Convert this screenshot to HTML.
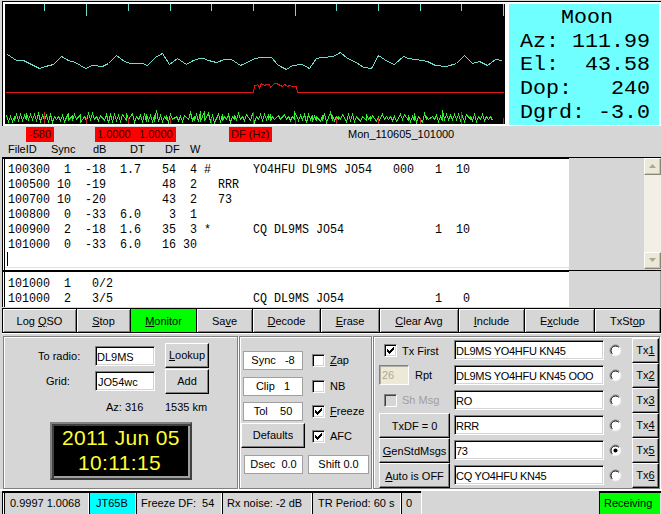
<!DOCTYPE html>
<html><head><meta charset="utf-8">
<style>
*{margin:0;padding:0}
html,body{width:662px;height:514px;overflow:hidden;background:#d6d6d6}
body{position:relative;font-family:"Liberation Sans",sans-serif;font-size:11px;color:#000}
.a{position:absolute;box-sizing:border-box}
.t{position:absolute;white-space:pre;line-height:11px;font-size:11px}
.m{position:absolute;white-space:pre;font-family:"Liberation Mono",monospace;font-size:13px;line-height:15px;transform:scaleX(0.8974);transform-origin:0 0}
.btn{position:absolute;box-sizing:border-box;border:1px solid #000;box-shadow:inset 1px 1px 0 #fff,inset -1px -1px 0 #808080;background:#d6d6d6;text-align:center;white-space:pre;line-height:22px;padding-top:1px}
.ent{position:absolute;box-sizing:border-box;background:#fff;border-top:1px solid #808080;border-left:1px solid #808080;border-bottom:1px solid #fff;border-right:1px solid #fff;box-shadow:inset 1px 1px 0 #000,inset -1px -1px 0 #d4d4d4;white-space:pre;padding-left:1px;padding-top:2px;line-height:17px}
.grv{position:absolute;box-sizing:border-box;border:1px solid #808080;box-shadow:1px 1px 0 #fff inset, 1px 1px 0 #fff}
.cb{position:absolute;box-sizing:border-box;width:13px;height:13px;background:#fff;border-top:1px solid #808080;border-left:1px solid #808080;border-bottom:1px solid #fff;border-right:1px solid #fff;box-shadow:inset 1px 1px 0 #000,inset -1px -1px 0 #d4d4d4}
.rd{position:absolute;width:12px;height:12px}
.rb{position:absolute;box-sizing:border-box;border-top:1px solid #fff;border-left:1px solid #fff;border-bottom:1px solid #000;border-right:1px solid #000;box-shadow:inset -1px -1px 0 #808080;background:#d6d6d6;text-align:center;white-space:pre;line-height:22px;padding-top:1px}
.red{position:absolute;background:#ff0000;height:15px}
.sb{position:absolute;top:491px;height:23px;box-sizing:border-box;border-top:1px solid #000;border-left:1px solid #000;border-right:1px solid #fff;line-height:21px;white-space:pre;padding-top:1px}
u{text-decoration:underline;text-underline-offset:0.5px;text-decoration-thickness:1px}
</style></head><body>

<div class="a" style="left:2px;top:1px;width:659px;height:1px;background:#000"></div>
<div class="a" style="left:2px;top:1px;width:1px;height:125px;background:#000"></div>
<div class="a" style="left:3px;top:2px;width:658px;height:124px;background:#fff"></div>
<svg width="500" height="120" viewBox="5 4 500 120" style="position:absolute;left:5px;top:4px">
<rect x="5" y="4" width="500" height="120" fill="#000"/>
<rect x="44" y="4" width="1" height="7" fill="#70dcd0"/>
<rect x="86" y="4" width="1" height="12" fill="#70dcd0"/>
<rect x="128" y="4" width="1" height="7" fill="#70dcd0"/>
<rect x="170" y="4" width="1" height="7" fill="#70dcd0"/>
<rect x="211" y="4" width="1" height="7" fill="#70dcd0"/>
<rect x="253" y="4" width="1" height="7" fill="#70dcd0"/>
<rect x="295" y="4" width="1" height="12" fill="#70dcd0"/>
<rect x="336" y="4" width="1" height="7" fill="#70dcd0"/>
<rect x="378" y="4" width="1" height="7" fill="#70dcd0"/>
<rect x="420" y="4" width="1" height="7" fill="#70dcd0"/>
<rect x="461" y="4" width="1" height="7" fill="#70dcd0"/>
<rect x="503" y="4" width="1" height="12" fill="#70dcd0"/>
<polyline points="7.5,54.5 16.5,60.5 23.5,60.5 39.5,68.5 45.5,66.5 53.5,64.5 61.5,56.5 68.5,60.5 75.5,62.5 85.5,68.5 92.5,65.5 102.5,66.5 108.5,63.5 116.5,55.5 124.5,61.5 130.5,63.5 142.5,63.5 147.5,65.5 155.5,57.5 162.5,53.5 169.5,64.5 177.5,58.5 186.5,64.5 193.5,60.5 199.5,58.5 203.5,58.5 208.5,60.5 216.5,62.5 224.5,59.5 231.5,59.5 240.5,65.5 255.5,58.5 260.5,57.5 271.5,57.5 277.5,64.5 280.5,66.5 286.5,69.5 292.5,65.5 302.5,64.5 309.5,68.5 316.5,58.5 322.5,57.5 333.5,56.5 340.5,52.5 347.5,58.5 356.5,62.5 363.5,67.5 371.5,68.5 378.5,55.5 387.5,61.5 394.5,64.5 403.5,56.5 408.5,58.5 422.5,60.5 427.5,61.5 435.5,65.5 446.5,66.5 456.5,63.5 464.5,55.5 472.5,63.5 479.5,61.5 487.5,65.5 495.5,59.5 502.5,60.5" fill="none" stroke="#70dcd0" stroke-width="1" shape-rendering="crispEdges"/>
<polyline points="5.5,92.5 253.5,92.5 254.5,86.5 254.5,85.5 256.5,85.5 257.5,84.5 258.5,85.5 259.5,87.5 261.5,83.5 264.5,85.5 266.5,84.5 269.5,84.5 270.5,87.5 271.5,86.5 274.5,83.5 276.5,83.5 278.5,84.5 280.5,85.5 282.5,86.5 284.5,84.5 286.5,85.5 287.5,86.5 289.5,85.5 292.5,86.5 295.5,86.5 296.5,86.5 297.5,92.5 503.5,92.5" fill="none" stroke="#e01414" stroke-width="1" shape-rendering="crispEdges"/>
<polyline points="6.5,115.5 8.5,121.5 10.5,116.5 12.5,121.5 14.5,116.5 14.5,120.5 16.5,114.5 18.5,120.5 20.5,114.5 22.5,120.5 24.5,115.5 26.5,119.5 26.5,113.5 28.5,119.5 30.5,114.5 32.5,119.5 34.5,114.5 36.5,120.5 38.5,113.5 40.5,121.5 42.5,115.5 44.5,119.5 46.5,115.5 48.5,121.5 50.5,114.5 52.5,122.5 54.5,116.5 56.5,119.5 58.5,116.5 60.5,120.5 62.5,115.5 64.5,121.5 68.5,113.5 68.5,120.5 72.5,115.5 72.5,120.5 74.5,114.5 76.5,119.5 80.5,114.5 80.5,122.5 84.5,116.5 86.5,120.5 88.5,113.5 90.5,119.5 92.5,113.5 94.5,119.5 96.5,116.5 98.5,120.5 100.5,115.5 104.5,120.5 106.5,114.5 108.5,122.5 110.5,114.5 112.5,121.5 114.5,114.5 116.5,120.5 118.5,115.5 120.5,121.5 122.5,114.5 126.5,120.5 126.5,113.5 128.5,119.5 132.5,113.5 134.5,122.5 136.5,116.5 138.5,119.5 140.5,115.5 142.5,121.5 144.5,114.5 146.5,121.5 146.5,114.5 148.5,120.5 150.5,115.5 152.5,121.5 154.5,115.5 154.5,121.5 156.5,110.5 158.5,121.5 160.5,115.5 162.5,121.5 164.5,116.5 166.5,119.5 166.5,115.5 168.5,122.5 170.5,114.5 172.5,119.5 176.5,116.5 178.5,120.5 180.5,116.5 182.5,121.5 184.5,115.5 188.5,119.5 190.5,112.5 192.5,120.5 194.5,116.5 194.5,120.5 196.5,114.5 198.5,121.5 200.5,111.5 200.5,121.5 204.5,111.5 204.5,120.5 208.5,113.5 210.5,121.5 212.5,115.5 214.5,122.5 218.5,114.5 220.5,121.5 222.5,114.5 222.5,120.5 224.5,116.5 226.5,119.5 228.5,114.5 230.5,122.5 232.5,116.5 234.5,119.5 234.5,115.5 236.5,119.5 238.5,113.5 240.5,119.5 242.5,116.5 244.5,120.5 246.5,114.5 250.5,120.5 252.5,113.5 254.5,122.5 256.5,116.5 258.5,119.5 260.5,114.5 262.5,120.5 264.5,114.5 266.5,119.5 268.5,114.5 268.5,119.5 270.5,114.5 270.5,120.5 272.5,116.5 274.5,119.5 278.5,115.5 280.5,119.5 284.5,114.5 286.5,119.5 288.5,116.5 290.5,120.5 292.5,116.5 294.5,119.5 294.5,111.5 298.5,120.5 300.5,115.5 302.5,119.5 304.5,114.5 306.5,122.5 308.5,114.5 310.5,119.5 312.5,115.5 312.5,121.5 314.5,116.5 316.5,120.5 316.5,116.5 320.5,121.5 322.5,115.5 322.5,120.5 324.5,113.5 326.5,122.5 330.5,112.5 332.5,120.5 332.5,115.5 334.5,120.5 336.5,116.5 338.5,119.5 338.5,116.5 340.5,119.5 342.5,114.5 346.5,121.5 348.5,114.5 350.5,120.5 352.5,114.5 354.5,121.5 356.5,116.5 360.5,121.5 362.5,116.5 366.5,120.5 366.5,114.5 368.5,119.5 370.5,116.5 370.5,120.5 372.5,115.5 376.5,121.5 378.5,116.5 378.5,121.5 382.5,114.5 384.5,119.5 386.5,116.5 388.5,119.5 390.5,116.5 392.5,120.5 394.5,116.5 396.5,121.5 400.5,114.5 402.5,119.5 404.5,114.5 408.5,120.5 408.5,115.5 410.5,121.5 412.5,116.5 414.5,120.5 414.5,113.5 416.5,122.5 418.5,116.5 422.5,122.5 424.5,113.5 426.5,119.5 426.5,116.5 428.5,119.5 432.5,116.5 434.5,119.5 436.5,115.5 438.5,121.5 440.5,116.5 442.5,120.5 442.5,110.5 444.5,119.5 446.5,114.5 448.5,119.5 450.5,115.5 452.5,119.5 454.5,114.5 456.5,119.5 458.5,114.5 460.5,120.5 462.5,116.5 464.5,121.5 466.5,114.5 470.5,119.5 470.5,116.5 472.5,120.5 474.5,114.5 476.5,121.5 478.5,116.5 480.5,119.5 482.5,114.5 484.5,120.5 486.5,116.5 488.5,119.5 490.5,116.5 492.5,120.5" fill="none" stroke="#30f030" stroke-width="1" shape-rendering="crispEdges"/>
<rect x="44" y="112" width="1" height="12" fill="#c82020"/>
<rect x="86" y="118" width="1" height="6" fill="#c82020"/>
<rect x="128" y="118" width="1" height="6" fill="#c82020"/>
<rect x="170" y="118" width="1" height="6" fill="#c82020"/>
<rect x="211" y="118" width="1" height="6" fill="#c82020"/>
<rect x="253" y="112" width="1" height="12" fill="#c82020"/>
<rect x="295" y="118" width="1" height="6" fill="#c82020"/>
<rect x="336" y="118" width="1" height="6" fill="#c82020"/>
<rect x="378" y="118" width="1" height="6" fill="#c82020"/>
<rect x="420" y="118" width="1" height="6" fill="#c82020"/>
<rect x="461" y="112" width="1" height="12" fill="#c82020"/>
<rect x="503" y="118" width="1" height="6" fill="#c82020"/>
</svg>
<div class="a" style="left:509px;top:4px;width:150px;height:121px;background:#70ffff"></div>
<div class="a" style="left:522px;top:7.9px;white-space:pre;font-family:'Liberation Mono',monospace;font-size:19.5px;line-height:20px;transform:scaleX(1.1111);transform-origin:0 0">   Moon</div>
<div class="a" style="left:520px;top:31.5px;white-space:pre;font-family:'Liberation Mono',monospace;font-size:19.5px;line-height:20px;transform:scaleX(1.1111);transform-origin:0 0">Az: 111.99</div>
<div class="a" style="left:520px;top:55.0px;white-space:pre;font-family:'Liberation Mono',monospace;font-size:19.5px;line-height:20px;transform:scaleX(1.1111);transform-origin:0 0">El:  43.58</div>
<div class="a" style="left:520px;top:78.8px;white-space:pre;font-family:'Liberation Mono',monospace;font-size:19.5px;line-height:20px;transform:scaleX(1.1111);transform-origin:0 0">Dop:   240</div>
<div class="a" style="left:520px;top:102.5px;white-space:pre;font-family:'Liberation Mono',monospace;font-size:19.5px;line-height:20px;transform:scaleX(1.1111);transform-origin:0 0">Dgrd: -3.0</div>
<div class="red" style="left:26px;top:127px;width:28px"></div>
<div class="t" style="left:29px;top:129px;color:#300000">-580</div>
<div class="red" style="left:95px;top:127px;width:81px"></div>
<div class="t" style="left:97px;top:129px;color:#300000">1.0000</div>
<div class="t" style="left:139px;top:129px;color:#300000">1.0000</div>
<div class="red" style="left:229px;top:127px;width:43px"></div>
<div class="t" style="left:231px;top:129px;color:#300000">DF (Hz)</div>
<div class="t" style="left:348px;top:129px">Mon_110605_101000</div>
<div class="t" style="left:8px;top:144px">FileID</div>
<div class="t" style="left:51px;top:144px">Sync</div>
<div class="t" style="left:93px;top:144px">dB</div>
<div class="t" style="left:130px;top:144px">DT</div>
<div class="t" style="left:165px;top:144px">DF</div>
<div class="t" style="left:190px;top:144px">W</div>
<div class="a" style="left:2px;top:157px;width:659px;height:1px;background:#000"></div>
<div class="a" style="left:2px;top:158px;width:567px;height:112px;background:#fff"></div>
<div class="a" style="left:2px;top:158px;width:567px;height:1px;background:#000"></div>
<div class="a" style="left:2px;top:158px;width:1px;height:112px;background:#000"></div>
<div class="a" style="left:4px;top:158px;width:1px;height:112px;background:#000"></div>
<div class="a" style="left:5px;top:267px;width:564px;height:1px;background:#e0e0e0"></div>
<div class="m" style="left:7.5px;top:162.2px">100300  1  -18  1.7   54  4 #      YO4HFU DL9MS JO54   000   1  10</div>
<div class="m" style="left:7.5px;top:177.2px">100500 10  -19        48  2   RRR</div>
<div class="m" style="left:7.5px;top:192.2px">100700 10  -20        43  2   73</div>
<div class="m" style="left:7.5px;top:207.2px">100800  0  -33  6.0    3  1</div>
<div class="m" style="left:7.5px;top:222.2px">100900  2  -18  1.6   35  3 *      CQ DL9MS JO54             1  10</div>
<div class="m" style="left:7.5px;top:237.2px">101000  0  -33  6.0   16 30</div>
<div class="a" style="left:7px;top:252px;width:1px;height:14px;background:#000"></div>
<div class="a" style="left:644px;top:158px;width:17px;height:111px;background:#f2f0e6"></div>
<div class="a" style="left:644px;top:158px;width:17px;height:17px;background:#ece9d8;border-top:1px solid #fffef8;border-left:1px solid #fffef8;border-right:1px solid #8a8878;border-bottom:1px solid #8a8878;box-shadow:inset -1px -1px 0 #c8c4b0;box-sizing:border-box"></div>
<div class="a" style="left:644px;top:252px;width:17px;height:17px;background:#ece9d8;border-top:1px solid #fffef8;border-left:1px solid #fffef8;border-right:1px solid #8a8878;border-bottom:1px solid #8a8878;box-shadow:inset -1px -1px 0 #c8c4b0;box-sizing:border-box"></div>
<svg class="a" style="left:648px;top:162px" width="10" height="8"><polygon points="1,6 4.5,2 8,6" fill="#a8a89a"/></svg>
<svg class="a" style="left:648px;top:256px" width="10" height="8"><polygon points="1,2 4.5,6 8,2" fill="#a8a89a"/></svg>
<div class="a" style="left:2px;top:270px;width:659px;height:1px;background:#000"></div>
<div class="a" style="left:2px;top:271px;width:567px;height:36px;background:#fff"></div>
<div class="a" style="left:2px;top:271px;width:567px;height:1px;background:#000"></div>
<div class="a" style="left:2px;top:271px;width:1px;height:36px;background:#000"></div>
<div class="a" style="left:4px;top:271px;width:1px;height:36px;background:#000"></div>
<div class="a" style="left:660px;top:271px;width:1px;height:36px;background:#a0a0a0"></div>
<div class="m" style="left:7.5px;top:275.5px">101000  1   0/2</div>
<div class="m" style="left:7.5px;top:290.5px">101000  2   3/5                    CQ DL9MS JO54             1   0</div>
<div class="btn" style="left:2px;top:308px;width:75px;height:25px;">Log <u>Q</u>SO</div>
<div class="btn" style="left:76px;top:308px;width:55px;height:25px;"><u>S</u>top</div>
<div class="btn" style="left:130px;top:308px;width:67px;height:25px;background:#00ff00;box-shadow:none;"><u>M</u>onitor</div>
<div class="btn" style="left:196px;top:308px;width:57px;height:25px;">Sa<u>v</u>e</div>
<div class="btn" style="left:252px;top:308px;width:69px;height:25px;"><u>D</u>ecode</div>
<div class="btn" style="left:320px;top:308px;width:60px;height:25px;"><u>E</u>rase</div>
<div class="btn" style="left:379px;top:308px;width:80px;height:25px;"><u>C</u>lear Avg</div>
<div class="btn" style="left:458px;top:308px;width:67px;height:25px;"><u>I</u>nclude</div>
<div class="btn" style="left:524px;top:308px;width:71px;height:25px;">E<u>x</u>clude</div>
<div class="btn" style="left:594px;top:308px;width:67px;height:25px;">TxSt<u>o</u>p</div>
<div class="a" style="left:2px;top:333px;width:659px;height:1px;background:#fff"></div>
<div class="grv" style="left:3px;top:336px;width:235px;height:153px"></div>
<div class="grv" style="left:239px;top:336px;width:133px;height:153px"></div>
<div class="grv" style="left:373px;top:336px;width:287px;height:153px"></div>
<div class="t" style="left:38px;top:351px">To radio:</div>
<div class="t" style="left:46px;top:376px">Grid:</div>
<div class="ent" style="left:95px;top:346px;width:60px;height:20px">DL9MS</div>
<div class="ent" style="left:95px;top:371px;width:60px;height:20px;padding-left:2px">JO54wc</div>
<div class="rb" style="left:165px;top:343px;width:44px;height:25px;padding-top:0"><u>L</u>ookup</div>
<div class="rb" style="left:165px;top:369px;width:44px;height:25px;padding-top:0">Add</div>
<div class="t" style="left:106px;top:402px">Az: 316</div>
<div class="t" style="left:165px;top:402px">1535 km</div>
<div class="a" style="left:50px;top:422px;width:142px;height:58px;background:#000;border:2px solid;border-color:#808080 #404040 #404040 #808080;box-shadow:inset 2px 2px 0 #404040,inset -2px -2px 0 #a0a0a0"></div>
<div class="a" style="left:62px;top:426px;font-size:21px;line-height:24px;letter-spacing:0.35px;color:#ffff30;white-space:pre">2011 Jun 05</div>
<div class="a" style="left:78px;top:451px;font-size:21px;line-height:24px;letter-spacing:0.35px;color:#ffff30;white-space:pre">10:11:15</div>
<div class="a" style="left:243px;top:351px;width:60px;height:19px;background:#fff;border:1px solid #a0a0a0;text-align:center;line-height:17px;white-space:pre">Sync   -8</div>
<div class="a" style="left:243px;top:377px;width:60px;height:19px;background:#fff;border:1px solid #a0a0a0;text-align:center;line-height:17px;white-space:pre">Clip   1</div>
<div class="a" style="left:243px;top:402px;width:60px;height:19px;background:#fff;border:1px solid #a0a0a0;text-align:center;line-height:17px;white-space:pre">Tol    50</div>
<div class="rb" style="left:241px;top:423px;width:64px;height:25px;padding-top:0">Defaults</div>
<div class="a" style="left:244px;top:455px;width:59px;height:19px;background:#fff;border:1px solid #a0a0a0;text-align:center;line-height:17px;white-space:pre">Dsec  0.0</div>
<div class="a" style="left:308px;top:455px;width:61px;height:19px;background:#fff;border:1px solid #a0a0a0;text-align:center;line-height:17px;white-space:pre">Shift 0.0</div>
<div class="cb" style="left:312px;top:354px"></div>
<div class="t" style="left:330px;top:355px"><u>Z</u>ap</div>
<div class="cb" style="left:312px;top:380px"></div>
<div class="t" style="left:330px;top:381px">NB</div>
<div class="cb" style="left:312px;top:405px"></div>
<svg class="a" style="left:312px;top:405px" width="13" height="13" shape-rendering="crispEdges"><rect x="9" y="3" width="1" height="1"/><rect x="8" y="4" width="1" height="1"/><rect x="9" y="4" width="1" height="1"/><rect x="3" y="5" width="1" height="1"/><rect x="7" y="5" width="1" height="1"/><rect x="8" y="5" width="1" height="1"/><rect x="9" y="5" width="1" height="1"/><rect x="3" y="6" width="1" height="1"/><rect x="4" y="6" width="1" height="1"/><rect x="6" y="6" width="1" height="1"/><rect x="7" y="6" width="1" height="1"/><rect x="8" y="6" width="1" height="1"/><rect x="3" y="7" width="1" height="1"/><rect x="4" y="7" width="1" height="1"/><rect x="5" y="7" width="1" height="1"/><rect x="6" y="7" width="1" height="1"/><rect x="7" y="7" width="1" height="1"/><rect x="4" y="8" width="1" height="1"/><rect x="5" y="8" width="1" height="1"/><rect x="6" y="8" width="1" height="1"/><rect x="5" y="9" width="1" height="1"/></svg>
<div class="t" style="left:330px;top:406px"><u>F</u>reeze</div>
<div class="cb" style="left:312px;top:430px"></div>
<svg class="a" style="left:312px;top:430px" width="13" height="13" shape-rendering="crispEdges"><rect x="9" y="3" width="1" height="1"/><rect x="8" y="4" width="1" height="1"/><rect x="9" y="4" width="1" height="1"/><rect x="3" y="5" width="1" height="1"/><rect x="7" y="5" width="1" height="1"/><rect x="8" y="5" width="1" height="1"/><rect x="9" y="5" width="1" height="1"/><rect x="3" y="6" width="1" height="1"/><rect x="4" y="6" width="1" height="1"/><rect x="6" y="6" width="1" height="1"/><rect x="7" y="6" width="1" height="1"/><rect x="8" y="6" width="1" height="1"/><rect x="3" y="7" width="1" height="1"/><rect x="4" y="7" width="1" height="1"/><rect x="5" y="7" width="1" height="1"/><rect x="6" y="7" width="1" height="1"/><rect x="7" y="7" width="1" height="1"/><rect x="4" y="8" width="1" height="1"/><rect x="5" y="8" width="1" height="1"/><rect x="6" y="8" width="1" height="1"/><rect x="5" y="9" width="1" height="1"/></svg>
<div class="t" style="left:330px;top:431px">AFC</div>
<div class="cb" style="left:384px;top:344px"></div>
<svg class="a" style="left:384px;top:344px" width="13" height="13" shape-rendering="crispEdges"><rect x="9" y="3" width="1" height="1"/><rect x="8" y="4" width="1" height="1"/><rect x="9" y="4" width="1" height="1"/><rect x="3" y="5" width="1" height="1"/><rect x="7" y="5" width="1" height="1"/><rect x="8" y="5" width="1" height="1"/><rect x="9" y="5" width="1" height="1"/><rect x="3" y="6" width="1" height="1"/><rect x="4" y="6" width="1" height="1"/><rect x="6" y="6" width="1" height="1"/><rect x="7" y="6" width="1" height="1"/><rect x="8" y="6" width="1" height="1"/><rect x="3" y="7" width="1" height="1"/><rect x="4" y="7" width="1" height="1"/><rect x="5" y="7" width="1" height="1"/><rect x="6" y="7" width="1" height="1"/><rect x="7" y="7" width="1" height="1"/><rect x="4" y="8" width="1" height="1"/><rect x="5" y="8" width="1" height="1"/><rect x="6" y="8" width="1" height="1"/><rect x="5" y="9" width="1" height="1"/></svg>
<div class="t" style="left:402px;top:346px">Tx First</div>
<div class="a" style="left:379px;top:365px;width:30px;height:20px;background:#ece9d8;border-top:1px solid #808080;border-left:1px solid #808080;border-bottom:1px solid #fff;border-right:1px solid #fff;box-shadow:inset 1px 1px 0 #b0b0a8;color:#aca899;line-height:18px;padding-left:2px">26</div>
<div class="t" style="left:415px;top:370px">Rpt</div>
<div class="a" style="left:384px;top:394px;width:13px;height:13px;border-top:1px solid #808080;border-left:1px solid #808080;border-bottom:1px solid #fff;border-right:1px solid #fff;box-shadow:inset 1px 1px 0 #404040;background:#d6d6d6"></div>
<div class="t" style="left:402px;top:395px;color:#a0a0a0">Sh Msg</div>
<div class="rb" style="left:379px;top:413px;width:71px;height:25px">TxDF = 0</div>
<div class="rb" style="left:379px;top:438px;width:71px;height:25px"><u>G</u>enStdMsgs</div>
<div class="rb" style="left:379px;top:463px;width:71px;height:25px"><u>A</u>uto is OFF</div>
<div class="ent" style="left:454px;top:340px;width:150px;height:20px;letter-spacing:-0.3px">DL9MS YO4HFU KN45</div>
<svg class="a" style="left:609px;top:344px" width="13" height="13"><circle cx="6.5" cy="6.5" r="5.5" fill="#fff" stroke="#e8e8e8"/><path d="M2.6,10.4 A5.5,5.5 0 0 1 10.4,2.6" fill="none" stroke="#808080"/><path d="M3.3,9.7 A4.5,4.5 0 0 1 9.7,3.3" fill="none" stroke="#000"/></svg>
<div class="rb" style="left:632px;top:338px;width:27px;height:25px;padding-top:0">Tx<u>1</u></div>
<div class="ent" style="left:454px;top:365px;width:150px;height:20px;letter-spacing:-0.3px">DL9MS YO4HFU KN45 OOO</div>
<svg class="a" style="left:609px;top:369px" width="13" height="13"><circle cx="6.5" cy="6.5" r="5.5" fill="#fff" stroke="#e8e8e8"/><path d="M2.6,10.4 A5.5,5.5 0 0 1 10.4,2.6" fill="none" stroke="#808080"/><path d="M3.3,9.7 A4.5,4.5 0 0 1 9.7,3.3" fill="none" stroke="#000"/></svg>
<div class="rb" style="left:632px;top:363px;width:27px;height:25px;padding-top:0">Tx<u>2</u></div>
<div class="ent" style="left:454px;top:390px;width:150px;height:20px;letter-spacing:-0.3px">RO</div>
<svg class="a" style="left:609px;top:394px" width="13" height="13"><circle cx="6.5" cy="6.5" r="5.5" fill="#fff" stroke="#e8e8e8"/><path d="M2.6,10.4 A5.5,5.5 0 0 1 10.4,2.6" fill="none" stroke="#808080"/><path d="M3.3,9.7 A4.5,4.5 0 0 1 9.7,3.3" fill="none" stroke="#000"/></svg>
<div class="rb" style="left:632px;top:388px;width:27px;height:25px;padding-top:0">Tx<u>3</u></div>
<div class="ent" style="left:454px;top:415px;width:150px;height:20px;letter-spacing:-0.3px">RRR</div>
<svg class="a" style="left:609px;top:419px" width="13" height="13"><circle cx="6.5" cy="6.5" r="5.5" fill="#fff" stroke="#e8e8e8"/><path d="M2.6,10.4 A5.5,5.5 0 0 1 10.4,2.6" fill="none" stroke="#808080"/><path d="M3.3,9.7 A4.5,4.5 0 0 1 9.7,3.3" fill="none" stroke="#000"/></svg>
<div class="rb" style="left:632px;top:413px;width:27px;height:25px;padding-top:0">Tx<u>4</u></div>
<div class="ent" style="left:454px;top:440px;width:150px;height:20px;letter-spacing:-0.3px">73</div>
<svg class="a" style="left:609px;top:444px" width="13" height="13"><circle cx="6.5" cy="6.5" r="5.5" fill="#fff" stroke="#e8e8e8"/><path d="M2.6,10.4 A5.5,5.5 0 0 1 10.4,2.6" fill="none" stroke="#808080"/><path d="M3.3,9.7 A4.5,4.5 0 0 1 9.7,3.3" fill="none" stroke="#000"/><circle cx="6.5" cy="6.5" r="2" fill="#000"/></svg>
<div class="rb" style="left:632px;top:438px;width:27px;height:25px;padding-top:0">Tx<u>5</u></div>
<div class="ent" style="left:454px;top:465px;width:150px;height:20px;letter-spacing:-0.3px">CQ YO4HFU KN45</div>
<svg class="a" style="left:609px;top:469px" width="13" height="13"><circle cx="6.5" cy="6.5" r="5.5" fill="#fff" stroke="#e8e8e8"/><path d="M2.6,10.4 A5.5,5.5 0 0 1 10.4,2.6" fill="none" stroke="#808080"/><path d="M3.3,9.7 A4.5,4.5 0 0 1 9.7,3.3" fill="none" stroke="#000"/></svg>
<div class="rb" style="left:632px;top:463px;width:27px;height:25px;padding-top:0">Tx<u>6</u></div>
<div class="a" style="left:0;top:489px;width:662px;height:2px;background:#fff"></div>
<div class="a" style="left:2px;top:491px;width:419px;height:2px;background:#000"></div>
<div class="a" style="left:599px;top:491px;width:62px;height:2px;background:#000"></div>
<div class="a" style="left:2px;top:493px;width:87px;height:21px;background:#d6d6d6;border-left:1px solid #000;border-right:1px solid #fff"></div>
<div class="t" style="left:10px;top:498px">0.9997 1.0068</div>
<div class="a" style="left:89px;top:493px;width:47px;height:21px;background:#00ffff;border-left:1px solid #000;border-right:1px solid #fff"></div>
<div class="t" style="left:96px;top:498px">JT65B</div>
<div class="a" style="left:136px;top:493px;width:86px;height:21px;background:#d6d6d6;border-left:1px solid #000;border-right:1px solid #fff"></div>
<div class="t" style="left:141px;top:498px">Freeze DF:  54</div>
<div class="a" style="left:222px;top:493px;width:90px;height:21px;background:#d6d6d6;border-left:1px solid #000;border-right:1px solid #fff"></div>
<div class="t" style="left:227px;top:498px">Rx noise: -2 dB</div>
<div class="a" style="left:312px;top:493px;width:89px;height:21px;background:#d6d6d6;border-left:1px solid #000;border-right:1px solid #fff"></div>
<div class="t" style="left:318px;top:498px">TR Period: 60 s</div>
<div class="a" style="left:401px;top:493px;width:21px;height:21px;background:#d6d6d6;border-left:1px solid #000;border-right:1px solid #fff"></div>
<div class="t" style="left:406px;top:498px">0</div>
<div class="a" style="left:3px;top:493px;width:1px;height:21px;background:#fff"></div>
<div class="a" style="left:4px;top:493px;width:1px;height:21px;background:#000"></div>
<div class="a" style="left:599px;top:493px;width:62px;height:21px;background:#00ff00;border-left:1px solid #000;border-right:1px solid #e0e0e0"></div>
<div class="t" style="left:604px;top:498px">Receiving</div>
</body></html>
